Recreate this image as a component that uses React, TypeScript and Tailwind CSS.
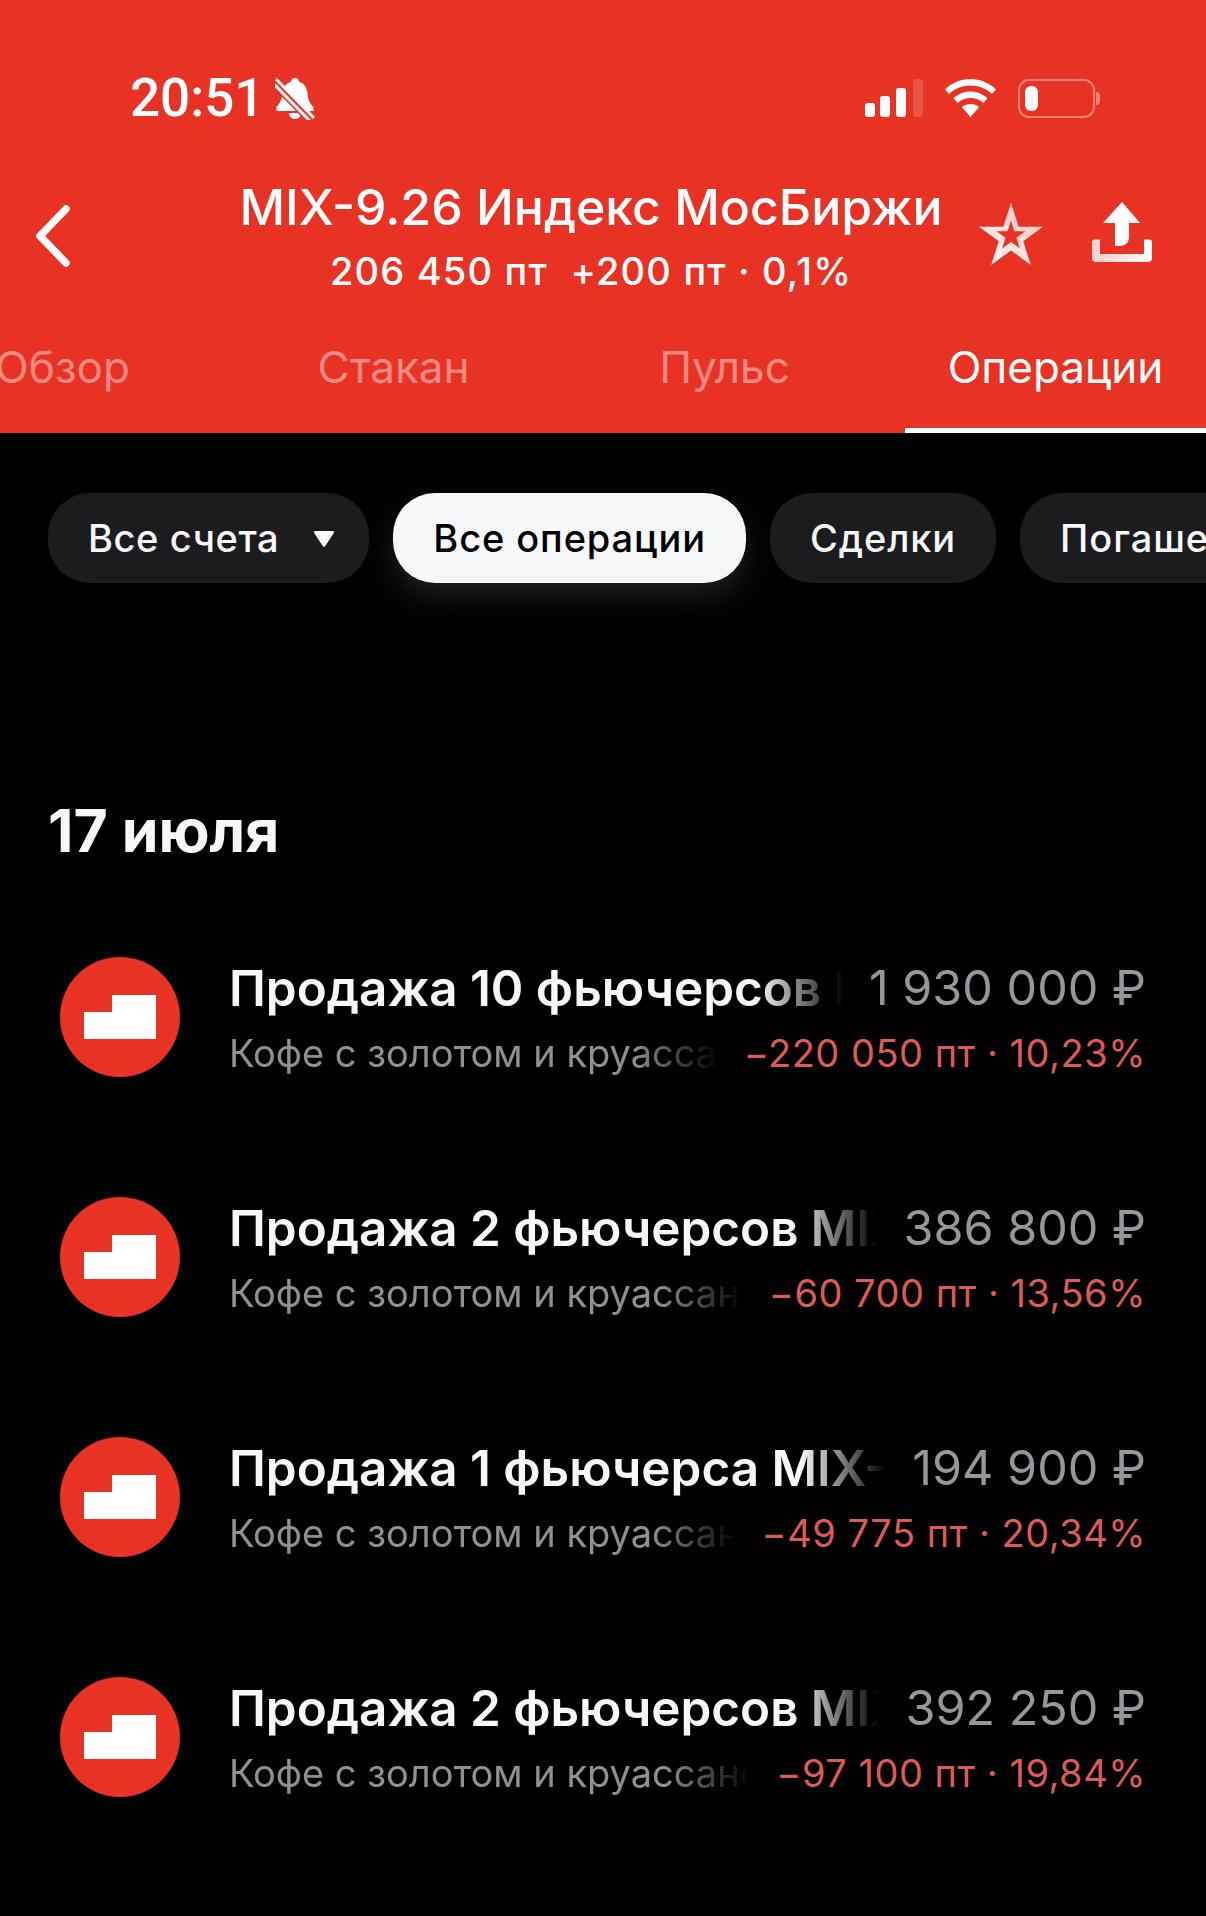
const operations = [
  { title: "Продажа 10 фьючерсов MIX-9.26 Индекс МосБиржи", amount: "1 930 000 ₽", result: "−220 050 пт · 10,23%" },
  { title: "Продажа 2 фьючерсов MIX-9.26 Индекс МосБиржи", amount: "386 800 ₽", result: "−60 700 пт · 13,56%" },
  { title: "Продажа 1 фьючерса MIX-9.26 Индекс МосБиржи", amount: "194 900 ₽", result: "−49 775 пт · 20,34%" },
  { title: "Продажа 2 фьючерсов MIX-9.26 Индекс МосБиржи", amount: "392 250 ₽", result: "−97 100 пт · 19,84%" },
];

const tabs = ["Обзор", "Стакан", "Пульс", "Операции"];
const chips = ["Все операции", "Сделки", "Погашения"];

function StatusBar() {
  return (
    <div className="flex h-[40px] items-center pl-[130px] pr-[106px]">
      <span className="font-['Roboto',sans-serif] text-[53px] leading-[40px] font-medium text-white">20:51</span>
      <svg className="ml-[11px]" width="40" height="44" viewBox="0 0 40 44">
        <path d="M20 2c2.400 0 4 1.600 4 3.800 5.500 1.700 8 6.200 8.500 11.500.4 5 1.500 9.500 6 14v3.700H1.500V31c4.500-4.500 5.600-9 6-13.700C8 12 10.500 7.500 16 5.800 16 3.600 17.600 2 20 2z" fill="#fff" />
        <path d="M14 37h12c0 3.500-2.500 6-6 6s-6-2.500-6-6z" fill="#fff" />
        <path d="M0 7l35 36" stroke="#e83324" strokeWidth="9" />
        <path d="M1 3l38 39" stroke="#fff" strokeWidth="3" />
        <path d="M-2 7l37 38" stroke="#fff" strokeWidth="3" />
      </svg>
      <div className="ml-auto flex items-center">
        <svg width="58" height="38" viewBox="0 0 58 38">
          <rect x="0" y="24" width="10" height="14" rx="3" fill="#fff" />
          <rect x="15" y="17" width="10" height="21" rx="3" fill="#fff" />
          <rect x="31" y="9" width="10" height="29" rx="3" fill="#fff" />
          <rect x="48" y="0" width="10" height="38" rx="3" fill="#fff" fillOpacity="0.16" />
        </svg>
        <svg className="ml-[22px]" width="51" height="38" viewBox="0 0 51 38">
          <path d="M25.500 0C35 0 44 3.800 51 10.500l-4 4.500C41.200 9.500 33.800 6.500 25.500 6.500S9.800 9.500 4 15l-4-4.500C7 3.800 16 0 25.500 0z" fill="#fff" />
          <path d="M25.500 12.500c6.300 0 12.300 2.500 17 6.800l-4.200 4.600c-3.500-3.200-8-5-12.800-5s-9.300 1.800-12.800 5l-4.200-4.600c4.700-4.300 10.700-6.800 17-6.800z" fill="#fff" />
          <path d="M25.500 25c3.200 0 6.200 1.100 8.500 3.200L25.500 38 17 28.200c2.300-2.100 5.300-3.200 8.500-3.200z" fill="#fff" />
        </svg>
        <div className="ml-[22px] flex items-center">
          <div className="flex h-[39px] w-[77px] items-center rounded-[11px] border-2 border-[#f67e77] pl-[5px]">
            <div className="h-[25px] w-[13px] rounded-[6px] bg-white" />
          </div>
          <div className="ml-[1px] h-[13px] w-[4px] rounded-r-full bg-[#f67e77]" />
        </div>
      </div>
    </div>
  );
}

function Header() {
  return (
    <header className="h-[433px] overflow-hidden bg-[#e83324] pt-[78px]">
      <StatusBar />
      <div className="mt-[59px] flex h-[110px] items-start">
        <svg className="ml-[36px] mt-[28px] shrink-0" width="34" height="62" viewBox="0 0 34 62" fill="none">
          <path d="M30 4L4 31l26 27" stroke="#fff" strokeWidth="7.500" strokeLinecap="round" strokeLinejoin="round" />
        </svg>
        <div className="ml-[159px] w-[724px] shrink-0 text-center text-white">
          <div className="text-[50px] leading-[60px] font-medium whitespace-nowrap">MIX-9.26 Индекс МосБиржи</div>
          <div className="mt-[12px] text-[38px] leading-[44px] font-medium tracking-[1.200px] whitespace-pre">206 450 пт  +200 пт · 0,1%</div>
        </div>
        <svg className="ml-[26px] mt-[26px] shrink-0" width="64" height="62" viewBox="0 0 64 62">
          <defs>
            <linearGradient id="starFill" x1="0" y1="1" x2="1" y2="0">
              <stop offset="0" stopColor="#fff" />
              <stop offset="1" stopColor="#f6bdb8" />
            </linearGradient>
          </defs>
          <path
            fillRule="evenodd"
            d="M32 0l7.600 23.700H64L44.200 38.300 51.800 62 32 47.400 12.200 62l7.600-23.700L0 23.700h24.400zM32 17.500l-3.400 10.700H17.500l9 6.600-3.400 10.700 8.900-6.600 8.900 6.600-3.400-10.700 9-6.600H35.400z"
            fill="url(#starFill)"
          />
        </svg>
        <svg className="ml-[49px] mt-[25px] shrink-0" width="60" height="60" viewBox="0 0 60 60">
          <defs>
            <linearGradient id="trayFill" x1="0" y1="0" x2="1" y2="0">
              <stop offset="0" stopColor="#f9cfcb" />
              <stop offset="1" stopColor="#fff" />
            </linearGradient>
          </defs>
          <path d="M30 0l18 21H37v14c0 6-4 9-10 9h-4V21H11z" fill="#fff" />
          <path d="M0 40c0-1.500 1-2.500 2.500-2.500H8V52h44V37.500h5.500c1.500 0 2.500 1 2.500 2.500v16c0 2.500-1.500 4-4 4H4c-2.500 0-4-1.500-4-4z" fill="url(#trayFill)" />
        </svg>
      </div>
      <nav className="ml-[-88px] mt-[41px] flex gap-[30px]">
        {tabs.map((tab, index) => (
          <div
            key={tab}
            className={`h-[106px] w-[301px] shrink-0 pt-[13px] text-center text-[44px] leading-[52px] ${
              index === 3 ? "border-b-[6px] border-white text-white" : "text-[#f98a84]"
            }`}
          >
            {tab}
          </div>
        ))}
      </nav>
    </header>
  );
}

function Filters() {
  return (
    <div className="flex gap-[24px] overflow-hidden pb-[40px] pl-[48px] pt-[60px]">
      <div className="flex h-[90px] shrink-0 items-center rounded-[42px] bg-[#1c1c1e] pl-[40px] pr-[35px] text-[38px] font-medium tracking-[0.600px] text-[#f6f7f8]">
        Все счета
        <svg className="ml-[35px] mt-[2px]" width="20" height="16" viewBox="0 0 20 16">
          <path d="M1.500 0h17c1.300 0 1.900 1 1.300 2.100l-8.500 13c-.6.900-2 .900-2.600 0L.2 2.100C-.4 1 .2 0 1.500 0z" fill="#f6f7f8" />
        </svg>
      </div>
      {chips.map((chip, index) => (
        <div
          key={chip}
          className={`flex h-[90px] shrink-0 items-center rounded-[42px] px-[40px] text-[38px] font-medium tracking-[0.900px] ${
            index === 0
              ? "bg-[#f6f7f8] text-black shadow-[0_14px_30px_rgba(255,255,255,0.12)]"
              : "bg-[#1c1c1e] text-[#f6f7f8]"
          }`}
        >
          {chip}
        </div>
      ))}
    </div>
  );
}

function SberLogo() {
  return (
    <div className="flex h-[120px] w-[120px] shrink-0 items-center justify-center rounded-full bg-[#e83324]">
      <svg width="72" height="44" viewBox="0 0 72 44">
        <path d="M28 0h44v44H0V17h28z" fill="#fff" />
      </svg>
    </div>
  );
}

function OperationRow({ title, amount, result }: (typeof operations)[number]) {
  return (
    <div className="flex h-[240px] items-start pl-[60px] pr-[60px]">
      <SberLogo />
      <div className="ml-[49px] flex min-w-0 flex-1 flex-col">
        <div className="flex h-[60px] items-center gap-[26px]">
          <div className="min-w-0 flex-1 overflow-hidden pt-[1px] text-[49.400px] leading-[60px] font-semibold whitespace-nowrap text-[#f6f7f8] [mask-image:linear-gradient(to_left,transparent,black_85px)]">
            {title}
          </div>
          <div className="shrink-0 pt-[1px] text-[48.500px] leading-[60px] text-[#94979b] whitespace-nowrap">{amount}</div>
        </div>
        <div className="mt-[13px] flex h-[46px] items-center gap-[26px]">
          <div className="min-w-0 flex-1 overflow-hidden text-[38px] leading-[46px] whitespace-nowrap text-[#8e9092] [mask-image:linear-gradient(to_left,transparent,black_85px)]">
            Кофе с золотом и круассаном
          </div>
          <div className="shrink-0 text-[38px] leading-[46px] tracking-[0.500px] text-[#dc5a58] whitespace-nowrap">{result}</div>
        </div>
      </div>
    </div>
  );
}

export default function App() {
  return (
    <div className="h-[1916px] w-[1206px] overflow-hidden bg-black font-['Inter',sans-serif]">
      <Header />
      <Filters />
      <div className="pl-[48px] pt-[174px] text-[59px] leading-[68px] font-bold text-[#f6f7f8]">17 июля</div>
      <div className="mt-[92px]">
        {operations.map((op, index) => (
          <OperationRow key={index} {...op} />
        ))}
      </div>
    </div>
  );
}
